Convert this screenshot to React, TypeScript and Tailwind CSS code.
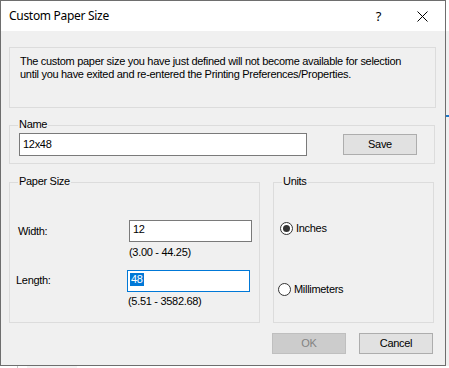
import React from "react";

const ui = { fontFamily: '"Liberation Sans", Arial, sans-serif', letterSpacing: "-0.3px" };
const title = { fontFamily: '"Noto Sans", "Open Sans", sans-serif', letterSpacing: "-0.3px" };

function Group({ label, className, children }: { label: string; className: string; children?: React.ReactNode }) {
  return (
    <div className={"relative border border-[#dcdcdc] " + className}>
      <span className="absolute -top-[8px] left-[8px] bg-[#f0f0f0] px-[1px] text-[11px] leading-[13px] text-black">
        {label}
      </span>
      {children}
    </div>
  );
}

function Radio({ checked, label, className }: { checked?: boolean; label: string; className: string }) {
  return (
    <div className={"flex items-center " + className}>
      <span className="flex h-[13px] w-[13px] items-center justify-center rounded-full border border-[#333333] bg-white">
        {checked && <span className="h-[7px] w-[7px] rounded-full bg-[#333333]" />}
      </span>
      <span className="ml-[3px] text-[11px] leading-[13px]">{label}</span>
    </div>
  );
}

export default function App() {
  return (
    <div className="h-[368px] w-[449px] overflow-hidden bg-white text-black" style={ui}>
      <div className="flex">
        <div className="flex h-[366px] w-[446px] flex-col border border-[#6e6e6e] bg-[#f0f0f0]">
          {/* title bar */}
          <div className="flex h-[30px] items-center bg-white">
            <span className="ml-[8px] text-[12px] leading-[16px]" style={title}>
              Custom Paper Size
            </span>
            <span className="ml-auto mr-[36px] text-[13px] leading-[16px]" style={title}>
              ?
            </span>
            <svg width="11" height="11" viewBox="0 0 11 11" className="mr-[17px]">
              <path d="M0.5 0.5 L10.5 10.5 M10.5 0.5 L0.5 10.5" stroke="#000" strokeWidth="1" />
            </svg>
          </div>

          {/* message */}
          <div className="ml-[8px] mt-[16px] h-[61px] w-[427px] whitespace-nowrap border border-[#dcdcdc] px-[10px] pt-[7px] text-[11px] leading-[13px]">
            The custom paper size you have just defined will not become available for selection
            <br />
            until you have exited and re-entered the Printing Preferences/Properties.
          </div>

          {/* name */}
          <Group label="Name" className="ml-[8px] mt-[17px] w-[426px] px-[9px] pb-[7px] pt-[7px]">
            <div className="flex items-start">
              <div className="flex h-[23px] w-[288px] items-center border border-[#7a7a7a] bg-white pl-[3px] text-[11px]">
                12x48
              </div>
              <div className="ml-[36px] mt-[1px] flex h-[21px] w-[74px] items-center justify-center border border-[#adadad] bg-[#e1e1e1] text-[11px]">
                Save
              </div>
            </div>
          </Group>

          {/* paper size + units */}
          <div className="ml-[8px] mt-[18px] flex">
            <Group label="Paper Size" className="h-[141px] w-[251px]">
              <div className="mt-[37px] flex items-start">
                <span className="ml-[8px] mt-[5px] w-[111px] text-[11px] leading-[13px]">Width:</span>
                <div>
                  <div className="flex h-[22px] w-[123px] items-start border border-[#7a7a7a] bg-white pl-[3px] pt-[2px] text-[11px] leading-[13px]">
                    12
                  </div>
                  <div className="mt-[4px] text-[11px] leading-[13px]">(3.00 - 44.25)</div>
                </div>
              </div>
              <div className="mt-[11px] flex items-start">
                <span className="ml-[6px] mt-[4px] w-[111px] text-[11px] leading-[13px]">Length:</span>
                <div>
                  <div className="flex h-[22px] w-[123px] items-start border border-[#0078d7] bg-white pl-[2px] pt-[2px] text-[11px] leading-[13px]">
                    <span className="bg-[#0078d7] px-[1px] text-white">48</span>
                  </div>
                  <div className="ml-[1px] mt-[3px] text-[11px] leading-[13px]">(5.51 - 3582.68)</div>
                </div>
              </div>
            </Group>
            <Group label="Units" className="ml-[13px] h-[141px] w-[161px]">
              <Radio checked label="Inches" className="ml-[6px] mt-[39px]" />
              <Radio label="Millimeters" className="ml-[4px] mt-[48px]" />
            </Group>
          </div>

          {/* buttons */}
          <div className="ml-[271px] mt-[10px] flex">
            <div className="flex h-[21px] w-[74px] items-center justify-center border border-[#bfbfbf] bg-[#cccccc] text-[11px] text-[#838383]">
              OK
            </div>
            <div className="ml-[13px] flex h-[21px] w-[74px] items-center justify-center border border-[#adadad] bg-[#e1e1e1] text-[11px]">
              Cancel
            </div>
          </div>
        </div>
        <div className="flex w-[3px] flex-col">
          <div className="h-[31px] bg-white" />
          <div className="h-[84px] bg-[#f0f0f0]" />
          <div className="h-[2px] bg-[#1e78c8]" />
          <div className="flex-1 bg-[#f0f0f0]" />
        </div>
      </div>
      <div className="h-[2px] overflow-hidden bg-white">
        <div className="ml-[17px] flex h-[2px]">
          <div className="w-[1px] bg-[#c8c8c8]" />
          <div className="ml-[9px] mt-[0px] h-[2px] w-[50px] bg-[#f4f4f4]" />
        </div>
      </div>
    </div>
  );
}
